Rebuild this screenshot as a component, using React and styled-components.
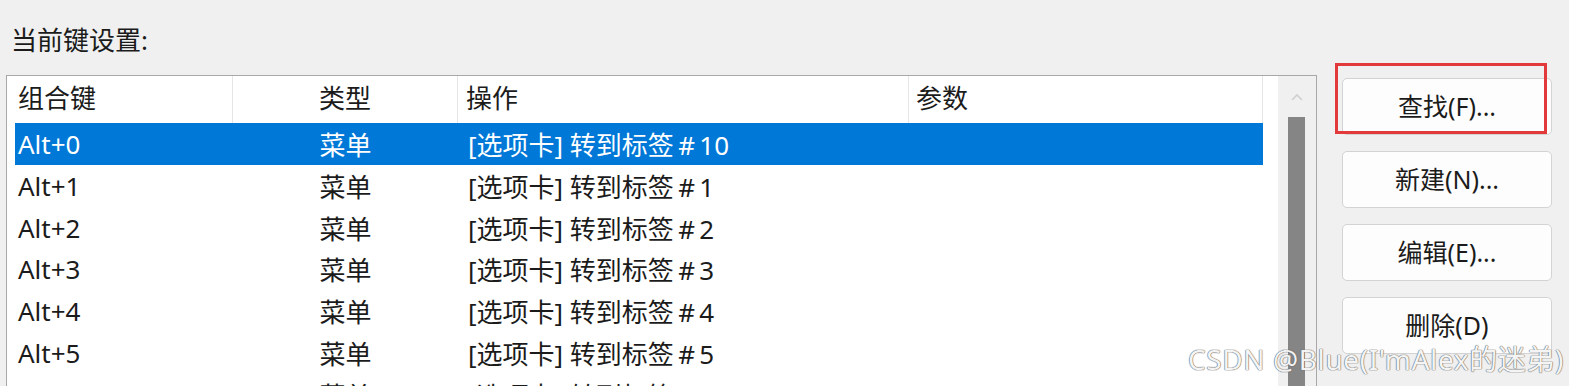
import React from 'react';
import styled, { createGlobalStyle } from 'styled-components';

const GlobalStyle = createGlobalStyle`
  html, body {
    margin: 0;
    padding: 0;
    background: #f0f0f0;
  }
  body {
    font-family: "Noto Sans", "Noto Sans CJK SC", sans-serif;
    color: #1b1b1b;
  }
`;

const Page = styled.div`
  position: relative;
  width: 1569px;
  height: 386px;
  overflow: hidden;
  display: flex;
  background: #f0f0f0;
`;

const LeftPane = styled.div`
  width: 1311px;
  margin-left: 6px;
  display: flex;
  flex-direction: column;
`;

const Label = styled.div`
  margin-top: 23px;
  margin-bottom: 18px;
  padding-left: 5px;
  height: 34px;
  line-height: 34px;
  font-size: 26px;
`;

const ListBox = styled.div`
  height: 340px;
  flex: none;
  display: flex;
  border: 1px solid #a8a8a8;
  background: #fff;
`;

const TableArea = styled.div`
  flex: 1;
  display: flex;
  flex-direction: column;
`;

const HeaderRow = styled.div`
  display: grid;
  grid-template-columns: 226px 225px 451px 354px;
  height: 47px;
`;

const HeaderCell = styled.div`
  display: flex;
  align-items: center;
  justify-content: ${(p) => (p.$center ? 'center' : 'flex-start')};
  padding-left: ${(p) => (p.$center ? 0 : p.$pad)}px;
  padding-bottom: 4px;
  font-size: 26px;
  color: #1b1b1b;
  border-right: 1px solid #e5e5e5;
  box-sizing: border-box;
`;

const Row = styled.div`
  display: grid;
  grid-template-columns: 218px 225px 451px 354px;
  width: 1248px;
  margin-left: 8px;
  height: 42px;
  background: ${(p) => (p.$selected ? '#0078d7' : 'transparent')};
  color: ${(p) => (p.$selected ? '#fff' : '#1b1b1b')};
  font-size: 26px;
`;

const Cell = styled.div`
  display: flex;
  align-items: center;
  justify-content: ${(p) => (p.$center ? 'center' : 'flex-start')};
  padding-left: ${(p) => (p.$center ? 0 : p.$pad)}px;
  white-space: nowrap;
`;

const ScrollBar = styled.div`
  width: 38px;
  background: #f0f0f0;
  display: flex;
  flex-direction: column;
  align-items: flex-start;
`;

const ArrowBox = styled.div`
  height: 41px;
  width: 100%;
  display: flex;
  justify-content: center;
  align-items: center;
`;

const Thumb = styled.div`
  margin-left: 10px;
  width: 17px;
  flex: 1;
  background: #858585;
`;

const ButtonColumn = styled.div`
  margin-left: 25px;
  padding-top: 78px;
  display: flex;
  flex-direction: column;
  gap: 16px;
`;

const ButtonWrap = styled.div`
  position: relative;
`;

const Button = styled.button`
  width: 210px;
  height: 57px;
  background: #fdfdfd;
  border: 1px solid #d3d3d3;
  border-radius: 5px;
  font-family: "Noto Sans", "Noto Sans CJK SC", sans-serif;
  font-size: 25px;
  color: #1b1b1b;
  padding: 0 0 3px;
`;

const Highlight = styled.div`
  position: absolute;
  left: -7px;
  top: -15px;
  width: 212px;
  height: 71px;
  box-sizing: border-box;
  border: 3px solid #e23a3a;
  pointer-events: none;
`;

const Watermark = styled.div`
  position: absolute;
  right: 5px;
  bottom: 8px;
  font-family: "Noto Sans", "Noto Sans CJK SC", sans-serif;
  font-size: 28px;
  letter-spacing: 0.6px;
  color: #f4f4f4;
  text-shadow: 0 0 1px #6f6f6f, 0 0 1px #6f6f6f, 0 0 1px #6f6f6f;
  white-space: nowrap;
`;

const rows = [
  { key: 'Alt+0', type: '菜单', action: '[选项卡] 转到标签\u2009#\u200910' },
  { key: 'Alt+1', type: '菜单', action: '[选项卡] 转到标签\u2009#\u20091' },
  { key: 'Alt+2', type: '菜单', action: '[选项卡] 转到标签\u2009#\u20092' },
  { key: 'Alt+3', type: '菜单', action: '[选项卡] 转到标签\u2009#\u20093' },
  { key: 'Alt+4', type: '菜单', action: '[选项卡] 转到标签\u2009#\u20094' },
  { key: 'Alt+5', type: '菜单', action: '[选项卡] 转到标签\u2009#\u20095' },
  { key: 'Alt+6', type: '菜单', action: '[选项卡] 转到标签\u2009#\u20096' },
];

const App = () => (
  <Page>
    <GlobalStyle />
    <LeftPane>
      <Label>当前键设置:</Label>
      <ListBox>
        <TableArea>
          <HeaderRow>
            <HeaderCell $pad={11}>组合键</HeaderCell>
            <HeaderCell $center>类型</HeaderCell>
            <HeaderCell $pad={8}>操作</HeaderCell>
            <HeaderCell $pad={7}>参数</HeaderCell>
          </HeaderRow>
          {rows.map((r, i) => (
            <Row key={r.key} $selected={i === 0}>
              <Cell $pad={3}>{r.key}</Cell>
              <Cell $center>{r.type}</Cell>
              <Cell $pad={10}>{r.action}</Cell>
              <Cell $pad={7}></Cell>
            </Row>
          ))}
        </TableArea>
        <ScrollBar>
          <ArrowBox>
            <svg width="12" height="8" viewBox="0 0 12 8">
              <path d="M1 7 L6 2 L11 7" fill="none" stroke="#d0d0d0" strokeWidth="1.6" />
            </svg>
          </ArrowBox>
          <Thumb />
        </ScrollBar>
      </ListBox>
    </LeftPane>
    <ButtonColumn>
      <ButtonWrap>
        <Button>查找(F)...</Button>
        <Highlight />
      </ButtonWrap>
      <Button>新建(N)...</Button>
      <Button>编辑(E)...</Button>
      <Button>删除(D)</Button>
    </ButtonColumn>
    <Watermark>CSDN @Blue(I'mAlex的迷弟)</Watermark>
  </Page>
);

export default App;
